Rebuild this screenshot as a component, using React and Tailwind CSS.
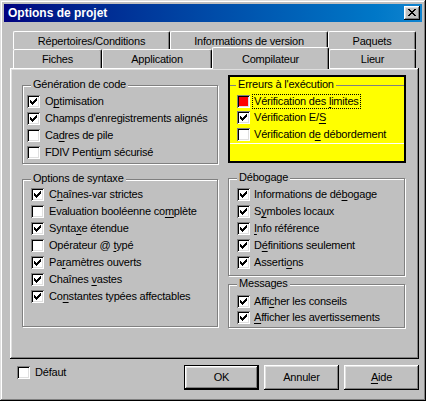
import React from 'react'

const raised = 'shadow-[inset_-1px_-1px_0_#000,inset_1px_1px_0_#fff,inset_-2px_-2px_0_#808080,inset_2px_2px_0_#dfdfdf]'
const sunken = 'shadow-[inset_1px_1px_0_#808080,inset_-1px_-1px_0_#fff,inset_2px_2px_0_#000,inset_-2px_-2px_0_#dfdfdf]'

// "&" marks the access key letter
function Label({ text }) {
    const i = text.indexOf('&')
    if (i < 0) return text
    return (
        <>
            {text.slice(0, i)}
            <span className="underline underline-offset-[2px]">{text[i + 1]}</span>
            {text.slice(i + 2)}
        </>
    )
}

function Check() {
    return (
        <svg className="absolute left-[3px] top-[3px]" width="7" height="7" viewBox="0 0 7 7" shapeRendering="crispEdges">
            <rect x="0" y="2" width="1" height="3" fill="#000" />
            <rect x="1" y="3" width="1" height="3" fill="#000" />
            <rect x="2" y="4" width="1" height="3" fill="#000" />
            <rect x="3" y="3" width="1" height="3" fill="#000" />
            <rect x="4" y="2" width="1" height="3" fill="#000" />
            <rect x="5" y="1" width="1" height="3" fill="#000" />
            <rect x="6" y="0" width="1" height="3" fill="#000" />
        </svg>
    )
}

function Box({ checked, red }) {
    return (
        <span className={`relative block w-[13px] h-[13px] shrink-0 ${red ? 'bg-[#ff0000]' : 'bg-white'} ${sunken}`}>
            {checked && <Check />}
        </span>
    )
}

function Row({ text, checked, red, focus, h = 'h-[17px]', gap = 'gap-[5px]' }) {
    return (
        <div className={`flex items-center ${h} ${gap}`}>
            <Box checked={checked} red={red} />
            {focus ? (
                <span className="-ml-[2px] px-[1px] leading-[13px] border border-dotted border-black whitespace-nowrap"><Label text={text} /></span>
            ) : (
                <span className="leading-[13px] whitespace-nowrap"><Label text={text} /></span>
            )}
        </div>
    )
}

function Group({ title, className, children }) {
    return (
        <div className={`relative border border-[#808080] shadow-[inset_1px_1px_0_#fff,1px_1px_0_#fff] ${className}`}>
            <span className="absolute -top-[8px] left-[8px] px-[2px] leading-[13px] bg-[#c0c0c0] whitespace-nowrap">{title}</span>
            {children}
        </div>
    )
}

function Tab({ label, w }) {
    return (
        <div className={`${w} h-full flex items-center justify-center pt-[1px] bg-[#c0c0c0] border-t border-l border-white border-r border-r-black rounded-t-[2px] shadow-[inset_-1px_0_0_#808080]`}>
            {label}
        </div>
    )
}

function Button({ children, def }) {
    return (
        <button className={`w-[75px] h-[25px] flex items-center justify-center bg-[#c0c0c0] ${def ? 'border border-black' : ''} ${raised}`}>
            {children}
        </button>
    )
}

export default function App() {
    return (
        <div className="font-['Liberation_Sans',Arial,sans-serif] text-[11px] tracking-[-0.2px] text-black bg-white w-[427px] h-[415px]">
            <div className={`w-[426px] h-[401px] bg-[#c0c0c0] p-[4px] shadow-[inset_-1px_-1px_0_#000,inset_1px_1px_0_#dfdfdf,inset_-2px_-2px_0_#808080,inset_2px_2px_0_#fff]`}>
                {/* title bar */}
                <div className="h-[18px] flex items-center justify-between pl-[4px] pr-[2px] bg-gradient-to-r from-[#000080] to-[#1084d0]">
                    <span className="text-white font-bold text-[12px] tracking-normal leading-[13px]">Options de projet</span>
                    <div className={`w-[16px] h-[14px] flex items-center justify-center bg-[#c0c0c0] ${raised}`}>
                        <svg width="8" height="7" viewBox="0 0 8 7" shapeRendering="crispEdges" className="-mt-[1px]">
                            <path d="M0 0h2v1H0zM6 0h2v1H6zM1 1h2v1H1zM5 1h2v1H5zM2 2h4v1H2zM3 3h2v1H3zM2 4h4v1H2zM1 5h2v1H1zM5 5h2v1H5zM0 6h2v1H0zM6 6h2v1H6z" fill="#000" />
                        </svg>
                    </div>
                </div>

                {/* tabs */}
                <div className="mt-[9px] ml-[9px] flex h-[18px]">
                    <Tab label="Répertoires/Conditions" w="w-[157px]" />
                    <Tab label="Informations de version" w="w-[158px]" />
                    <Tab label="Paquets" w="w-[88px]" />
                </div>
                <div className="ml-[9px] flex items-end h-[19px] relative z-10">
                    <Tab label="Fiches" w="w-[89px]" />
                    <Tab label="Application" w="w-[110px]" />
                    <div className="w-[117px] h-[22px] -mb-[1px] flex items-start justify-center pt-[3px] bg-[#c0c0c0] border-t border-l border-white border-r border-r-black rounded-t-[2px] shadow-[inset_-1px_0_0_#808080]">
                        Compilateur
                    </div>
                    <Tab label="Lieur" w="w-[87px]" />
                </div>

                {/* panel */}
                <div className={`ml-[6px] w-[409px] h-[291px] flex gap-[10px] pl-[12px] ${raised}`}>
                    <div className="flex flex-col gap-[15px] pt-[17px]">
                        <Group title="Génération de code" className="w-[196px] h-[79px] pt-[7px] pl-[4px]">
                            <Row text="O&ptimisation" checked />
                            <Row text="Champs d'enregistrements alignés" checked />
                            <Row text="Ca&dres de pile" />
                            <Row text="FDIV Penti&um sécurisé" />
                        </Group>
                        <Group title="Options de syntaxe" className="w-[196px] h-[148px] pt-[6px] pl-[8px]">
                            <Row text="C&haînes-var strictes" checked />
                            <Row text="Evaluation booléenne co&mplète" />
                            <Row text="Synta&xe étendue" checked />
                            <Row text="Opérateur @ &typé" />
                            <Row text="Pa&ramètres ouverts" checked />
                            <Row text="Chaînes &vastes" checked />
                            <Row text="Co&nstantes typées affectables" checked />
                        </Group>
                    </div>
                    <div className="flex flex-col pt-[7px]">
                        <div className="w-[178px] h-[88px] border-2 border-black bg-[#ffff00]">
                            <div className="relative mt-[8px] border-t border-[#808080] shadow-[0_1px_0_#fff] pl-[7px] pt-[7px]">
                                <span className="absolute -top-[8px] left-[6px] px-[2px] leading-[13px] bg-[#ffff00] whitespace-nowrap">Erreurs à l'exécution</span>
                                <Row text="Vérification des &limites" red focus h="h-[16.5px]" gap="gap-[4px]" />
                                <Row text="Vérification E/&S" checked h="h-[16.5px]" gap="gap-[4px]" />
                                <Row text="Vérification d&e débordement" h="h-[16.5px]" gap="gap-[4px]" />
                            </div>
                        </div>
                        <Group title="Débogage" className="mt-[15px] w-[177px] h-[98px] pt-[7px] pl-[8px]">
                            <Row text="Informations de dé&bogage" checked gap="gap-[4px]" />
                            <Row text="S&ymboles locaux" checked gap="gap-[4px]" />
                            <Row text="&Info référence" checked gap="gap-[4px]" />
                            <Row text="D&éfinitions seulement" checked gap="gap-[4px]" />
                            <Row text="Asserti&ons" checked gap="gap-[4px]" />
                        </Group>
                        <Group title="Messages" className="mt-[8px] w-[177px] h-[44px] pt-[8px] pl-[8px]">
                            <Row text="Affi&cher les conseils" checked h="h-[16px]" gap="gap-[4px]" />
                            <Row text="&Afficher les avertissements" checked h="h-[16px]" gap="gap-[4px]" />
                        </Group>
                    </div>
                </div>

                {/* bottom buttons */}
                <div className="mt-[6px] flex items-start">
                    <div className="ml-[13px] mt-[1px] flex items-center gap-[5px] h-[13px]">
                        <Box />
                        <span className="leading-[13px]">Défaut</span>
                    </div>
                    <div className="ml-auto mr-[3px] flex gap-[5px]">
                        <Button def>OK</Button>
                        <Button>Annuler</Button>
                        <Button><Label text="&Aide" /></Button>
                    </div>
                </div>
            </div>
        </div>
    )
}
